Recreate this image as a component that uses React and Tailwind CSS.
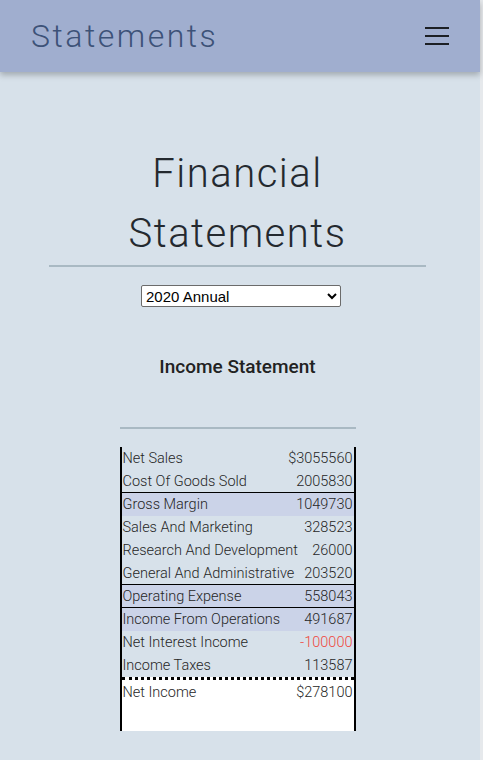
import React from 'react';

const rows = [
    { label: 'Net Sales', value: '$3055560' },
    { label: 'Cost Of Goods Sold', value: '2005830', borderBottom: true },
    { label: 'Gross Margin', value: '1049730', highlight: true },
    { label: 'Sales And Marketing', value: '328523' },
    { label: 'Research And Development', value: '26000' },
    { label: 'General And Administrative', value: '203520', borderBottom: true },
    { label: 'Operating Expense', value: '558043', highlight: true, borderBottom: true },
    { label: 'Income From Operations', value: '491687', highlight: true },
    { label: 'Net Interest Income', value: '-100000', negative: true },
    { label: 'Income Taxes', value: '113587' },
];

const Row = ({ row }) => (
    <div
        className={[
            'flex h-[23px] items-center justify-between pl-[1px] pr-[1px] leading-[23px]',
            row.highlight ? 'bg-[#cbd3e8]' : '',
            row.borderBottom ? 'border-b border-black' : '',
        ].join(' ')}
    >
        <span>{row.label}</span>
        <span className={row.negative ? 'text-[#f0483e]' : ''}>{row.value}</span>
    </div>
);

const App = () => {
    return (
        <div className="flex min-h-[760px] w-full bg-[#e6e9ec] font-['Roboto',sans-serif]">
            <div className="w-[480px] shrink-0 bg-[#d7e1ea]">
                <header className="relative z-10 flex h-[72px] items-center justify-between bg-[#a0aecf] pl-[31px] pr-[31px] shadow-[0_3px_6px_rgba(0,0,0,0.25)]">
                    <div className="text-[32px] font-light tracking-[2.5px] text-[#3d5278]">Statements</div>
                    <div className="flex w-[24px] flex-col gap-[6px]">
                        <span className="block h-[2px] w-[24px] bg-[#1c1f24]" />
                        <span className="block h-[2px] w-[24px] bg-[#1c1f24]" />
                        <span className="block h-[2px] w-[24px] bg-[#1c1f24]" />
                    </div>
                </header>

                <main className="flex flex-col items-center pr-[5px] pb-[28px]">
                    <h1 className="mt-[72px] w-[377px] border-b-2 border-[#a9b9c3] pb-[1px] text-center text-[40px] font-light leading-[60px] tracking-[1.5px] text-[#24292f]">
                        Financial
                        <br />
                        Statements
                    </h1>

                    <select
                        defaultValue="2020"
                        className="ml-[7px] mt-[18px] h-[22px] w-[200px] rounded-[2px] border border-[#6b6b6b] bg-white font-['Liberation_Sans',Arial,sans-serif] text-[15px] text-black"
                    >
                        <option value="2020">2020 Annual</option>
                        <option value="2019">2019 Annual</option>
                    </select>

                    <h2 className="mt-[48px] text-[19px] font-medium leading-[24px] text-[#222]">Income Statement</h2>

                    <div className="mt-[48px] h-[2px] w-[236px] bg-[#a9b9c3]" />

                    <div className="mt-[18px] w-[236px] border-l-2 border-r-2 border-black text-[14.5px] font-light text-[#262626]">
                        {rows.map((row) => (
                            <Row key={row.label} row={row} />
                        ))}
                        <div className="h-[54px] border-t-[3px] border-dotted border-black bg-white">
                            <div className="flex h-[25px] items-center justify-between px-[1px] leading-[25px]">
                                <span>Net Income</span>
                                <span>$278100</span>
                            </div>
                        </div>
                    </div>
                </main>
            </div>
            <div className="flex-1" />
        </div>
    );
};

export default App;
